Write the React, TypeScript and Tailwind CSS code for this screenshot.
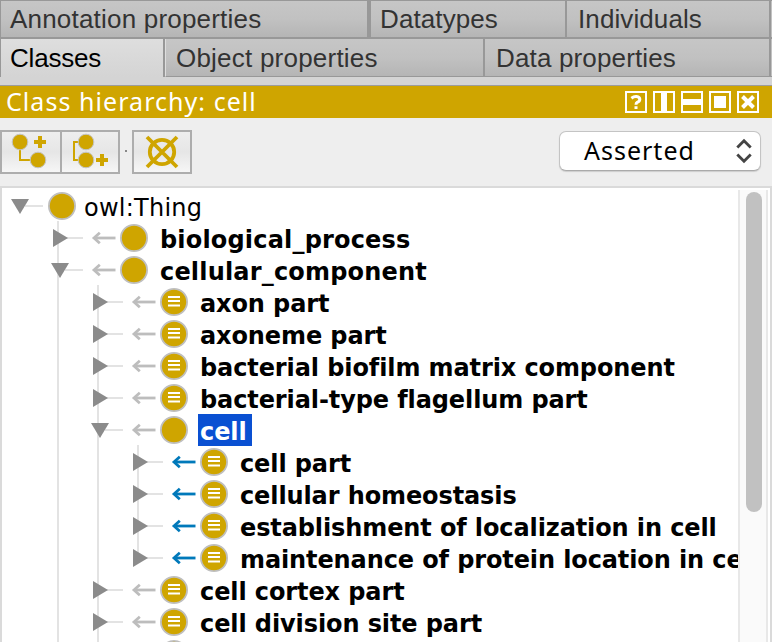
import React from "react";

const GOLD = "#cfa500";

function Tab({ label, className }: { label: string; className: string }) {
  return (
    <div
      className={`flex items-center whitespace-nowrap font-['Liberation_Sans',Arial,sans-serif] text-[26px] leading-none ${className}`}
    >
      {label}
    </div>
  );
}

const idleTab = "bg-linear-to-b from-[#c6c6c6] via-[#c1c1c1] to-[#b5b5b5] text-[#333]";

function Tabs() {
  return (
    <div className="shrink-0 bg-[#d4d4d4]">
      <div className="flex h-[39px] border-t border-b-2 border-l border-[#989898] bg-[#c2c2c2]">
        <Tab label="Annotation properties" className={`w-[370px] border-r-4 border-[#989898] pl-[9px] tracking-[0.2px] ${idleTab}`} />
        <Tab label="Datatypes" className={`w-[196px] border-r-2 border-[#989898] pl-[9px] tracking-[0.1px] ${idleTab}`} />
        <Tab label="Individuals" className={`w-[204px] border-r-2 border-[#989898] pl-[11px] tracking-[0.1px] ${idleTab}`} />
      </div>
      <div className="flex h-[38px] border-l border-[#989898]">
        <Tab
          label="Classes"
          className="w-[164px] border-r-2 border-[#989898] bg-linear-to-b from-[#dedede] to-[#d4d4d4] pl-[9px] tracking-[-0.2px] text-black"
        />
        <Tab
          label="Object properties"
          className={`w-[320px] border-r-2 border-b border-l border-r-[#989898] border-b-[#989898] border-l-[#dedede] pl-[10px] tracking-[0.22px] ${idleTab}`}
        />
        <Tab label="Data properties" className={`w-[286px] border-r-2 border-b border-[#989898] pl-[11px] tracking-[0.15px] ${idleTab}`} />
        <div className="flex-1 border-b border-[#989898] bg-[#c2c2c2]" />
      </div>
      <div className="h-[9px] border-b border-[#9c9c9c]" />
    </div>
  );
}

function HeaderButton({ children }: { children: React.ReactNode }) {
  return (
    <svg width="22" height="22" viewBox="0 0 22 22" className="block">
      <rect x="1" y="1" width="20" height="20" fill="none" stroke="#fff" strokeWidth="2" />
      {children}
    </svg>
  );
}

function Header() {
  return (
    <div className="flex h-8 shrink-0 items-center justify-between bg-[#cfa500] pr-[13px] pl-[6px] text-white">
      <span className="pb-[2px] font-['Noto_Sans',sans-serif] text-[25px] leading-none tracking-[1.05px] whitespace-nowrap">
        Class hierarchy: cell
      </span>
      <div className="flex gap-[6px]">
        <HeaderButton>
          <path d="M6.4 7.2Q8.8 5.3 11.4 5.5Q14.9 5.9 14.8 8.5Q14.6 10.4 12.2 11.3Q11 12 11 13.8M11 15.2V18" fill="none" stroke="#fff" strokeWidth="3" />
        </HeaderButton>
        <HeaderButton>
          <rect x="8" y="1" width="6" height="20" fill="#fff" />
        </HeaderButton>
        <HeaderButton>
          <rect x="1" y="8" width="20" height="6" fill="#fff" />
        </HeaderButton>
        <HeaderButton>
          <rect x="5" y="5" width="12" height="12" fill="#fff" />
        </HeaderButton>
        <HeaderButton>
          <path d="M5.5 5.5L16.5 16.5M16.5 5.5L5.5 16.5" stroke="#fff" strokeWidth="4" />
        </HeaderButton>
      </div>
    </div>
  );
}

const toolButton = "h-11 border-2 border-[#adadad] bg-linear-to-b from-[#eee] via-[#e6e6e6] to-[#f6f6f6]";

function Toolbar() {
  return (
    <div className="flex h-[68px] shrink-0 items-start bg-[#eee] pt-3">
      <div className={`w-[62px] ${toolButton}`}>
        <svg width="58" height="40" viewBox="2 132 58 40">
          <path d="M20 148V160H32" fill="none" stroke={GOLD} strokeWidth="2" />
          <circle cx="20" cy="142" r="7.8" fill={GOLD} stroke="#c4c4c4" />
          <circle cx="38" cy="160" r="7.8" fill={GOLD} stroke="#c4c4c4" />
          <path d="M40 136V148M34 142H46" stroke={GOLD} strokeWidth="4" />
        </svg>
      </div>
      <div className={`w-[58px] border-l-0 ${toolButton}`}>
        <svg width="56" height="40" viewBox="62 132 56 40">
          <path d="M79 142H74V160H79" fill="none" stroke={GOLD} strokeWidth="2" />
          <circle cx="86" cy="142" r="7.8" fill={GOLD} stroke="#c4c4c4" />
          <circle cx="86" cy="160" r="7.8" fill={GOLD} stroke="#c4c4c4" />
          <path d="M102 154V166M96 160H108" stroke={GOLD} strokeWidth="4" />
        </svg>
      </div>
      <div className="mt-5 ml-[5px] size-[2px] bg-[#888]" />
      <div className={`ml-[5px] w-[60px] ${toolButton}`}>
        <svg width="56" height="40" viewBox="134 132 56 40">
          <circle cx="162" cy="152" r="12.2" fill="none" stroke={GOLD} strokeWidth="3.8" />
          <path d="M147 137L177 167M177 137L147 167" stroke={GOLD} strokeWidth="3.8" />
        </svg>
      </div>
      <div className="mt-[1px] mr-[11px] ml-auto flex h-10 w-[202px] items-center justify-between rounded-[7px] border border-[#c4c4c4] border-b-[#aaa] bg-white pr-2 pl-6 shadow-[0_1px_1px_#ccc]">
        <span className="pb-[2px] font-['Noto_Sans',sans-serif] text-[25px] leading-none tracking-[1px] text-black">Asserted</span>
        <svg width="16" height="26" viewBox="0 0 16 26" fill="none" stroke="#444" strokeWidth="2.8">
          <path d="M1.3 9.5L8 2.7L14.7 9.5M1.3 16.5L8 23.3L14.7 16.5" />
        </svg>
      </div>
    </div>
  );
}

type Node = {
  label: string;
  level: number;
  open?: boolean;
  defined?: boolean;
  blue?: boolean;
  last?: boolean;
  selected?: boolean;
};

const nodes: Node[] = [
  { label: "owl:Thing", level: 0, open: true },
  { label: "biological_process", level: 1 },
  { label: "cellular_component", level: 1, open: true },
  { label: "axon part", level: 2, defined: true },
  { label: "axoneme part", level: 2, defined: true },
  { label: "bacterial biofilm matrix component", level: 2, defined: true },
  { label: "bacterial-type flagellum part", level: 2, defined: true },
  { label: "cell", level: 2, open: true, selected: true },
  { label: "cell part", level: 3, defined: true, blue: true },
  { label: "cellular homeostasis", level: 3, defined: true, blue: true },
  { label: "establishment of localization in cell", level: 3, defined: true, blue: true },
  { label: "maintenance of protein location in cell", level: 3, defined: true, blue: true, last: true },
  { label: "cell cortex part", level: 2, defined: true },
  { label: "cell division site part", level: 2, defined: true },
  { label: "", level: 2, defined: true },
];

const labelStyle = ["tracking-[0.25px]", "font-bold tracking-[0.18px]", "font-bold tracking-[-0.1px]", "font-bold tracking-[-0.11px]"];

// Connector lines, disclosure triangle, relation arrow and class symbol of one row.
function RowGlyphs({ node }: { node: Node }) {
  const { level } = node;
  const root = level === 0;
  const tri = 20 + 40 * level;
  const circle = root ? 62 : 94 + 40 * level;
  const width = circle + (root ? 18 : 22);
  const arrow = 52 + 40 * level;
  const color = node.blue ? "#0079ba" : "#bdbdbd";
  return (
    <svg width={width} height="32" viewBox={`2 0 ${width} 32`} className="block shrink-0 overflow-visible">
      {Array.from({ length: level }, (_, i) => (
        <rect key={i} x={57 + 40 * i} y="-1" width="2" height={node.last && i === level - 1 ? 17 : 33} fill="#e3e3e3" />
      ))}
      <rect x={tri + 5} y="15" width="18" height="2" fill="#e3e3e3" />
      {node.open ? (
        <path d={`M${tri - 9} 9H${tri + 9}L${tri} 24Z`} fill="#8b8b8b" />
      ) : (
        <path d={`M${tri - 7} 7V25L${tri + 8} 16Z`} fill="#8b8b8b" />
      )}
      {!root && (
        <g fill="none" stroke={color}>
          <path d={`M${arrow + 2} 16H${arrow + 23.5}`} strokeWidth="2.8" />
          <path d={`M${arrow + 7.8} 10.8L${arrow + 2} 16L${arrow + 7.8} 21.2`} strokeWidth="2.8" />
        </g>
      )}
      <circle cx={circle} cy="16" r="13.1" fill={GOLD} stroke="#bfbfbf" strokeWidth="1.8" />
      {node.defined && (
        <path d={`M${circle - 6} 11h12m-12 4h12m-12 4.4h12`} stroke="#fff" strokeWidth="2" />
      )}
    </svg>
  );
}

function Tree() {
  return (
    <div className="flex min-h-0 flex-1 border-t-2 border-r-2 border-l-2 border-[#dadada] bg-white">
      <div className="w-[736px] shrink-0 overflow-hidden pt-[2px]">
        {nodes.map((node, i) => (
          <div key={i} className="flex h-8">
            <RowGlyphs node={node} />
            <span
              className={`h-8 pr-[5px] pl-[2px] font-['DejaVu_Sans',sans-serif] text-[24px] leading-[37px] whitespace-nowrap ${labelStyle[node.level]} ${
                node.selected ? "bg-[#0a50d2] text-white" : "text-black"
              }`}
            >
              {node.label}
            </span>
          </div>
        ))}
      </div>
      <div className="mt-[2px] w-[30px] shrink-0 border-r-2 border-l-2 border-[#e8e8e8] bg-[#fafafa] pt-[2px] pl-[6px]">
        <div className="h-80 w-4 rounded-full bg-[#c1c1c1]" />
      </div>
    </div>
  );
}

export default function App() {
  return (
    <div className="flex h-[642px] w-[772px] flex-col overflow-hidden bg-[#eee]">
      <Tabs />
      <Header />
      <Toolbar />
      <Tree />
    </div>
  );
}
